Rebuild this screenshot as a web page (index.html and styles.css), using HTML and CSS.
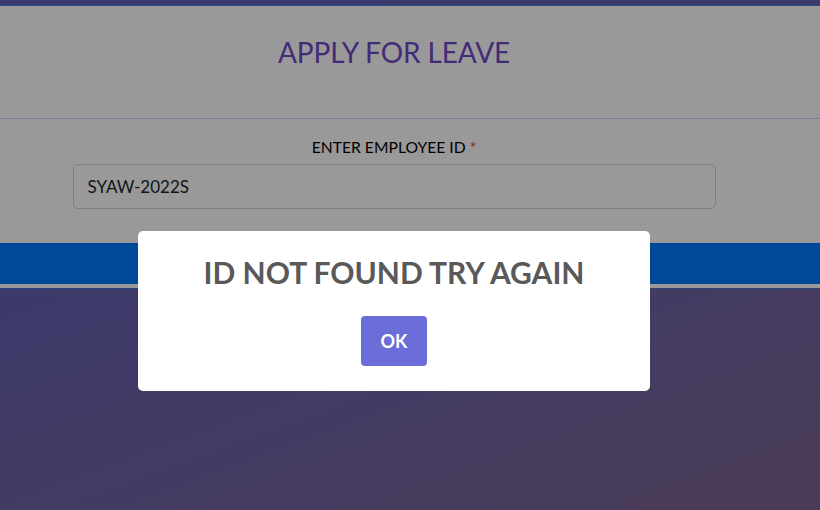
FILE: index.html
```html
<!DOCTYPE html>
<html lang="en">
<head>
<meta charset="utf-8">
<title>Apply for Leave</title>
<link rel="stylesheet" href="styles.css">
</head>
<body>
  <div class="page">
    <div class="card">
      <header class="card-head">
        <h1 class="title">APPLY FOR LEAVE</h1>
      </header>
      <form class="card-body">
        <label class="field-label" for="emp">ENTER EMPLOYEE ID <span class="req">*</span></label>
        <input class="field-input" id="emp" type="text" value="SYAW-2022S">
      </form>
      <div class="actions">
        <button class="submit" type="button" aria-label="Submit"></button>
      </div>
    </div>
  </div>

  <div class="overlay">
    <div class="modal">
      <h2 class="modal-title">ID NOT FOUND TRY AGAIN</h2>
      <button class="modal-ok" type="button">OK</button>
    </div>
  </div>
</body>
</html>
```
FILE: styles.css
```css
* { box-sizing: border-box; }

html, body {
  margin: 0;
  height: 100%;
}

body {
  font-family: "Lato", "Open Sans", sans-serif;
  background: linear-gradient(160deg, #6161bb 0%, #6762b1 40%, #7d6693 100%);
  min-height: 510px;
  overflow: hidden;
}

.page {
  padding-top: 5px;
}

.card {
  background: #ffffff;
  border-top: 1px solid #4a7fe0;
  border-bottom: 1px solid #3f72d6;
}

.card-head {
  height: 113px;
  padding-top: 29px;
  border-bottom: 1px solid #c2d3f5;
}

.title {
  width: 788px;
  margin: 0;
  text-align: center;
  font-weight: 400;
  font-size: 28px;
  line-height: 34px;
  letter-spacing: -0.1px;
  color: #7249c6;
}

.card-body {
  width: 788px;
  padding-top: 18px;
  padding-bottom: 34px;
  display: flex;
  flex-direction: column;
  align-items: center;
}

.field-label {
  font-size: 15.7px;
  line-height: 20px;
  color: #000000;
  margin-bottom: 7px;
}

.req {
  color: #dc3545;
}

.field-input {
  width: 643px;
  height: 45px;
  padding: 0 14px;
  border: 1px solid #ced4da;
  border-radius: 5px;
  font-family: "Lato", "Open Sans", sans-serif;
  font-size: 17px;
  color: #212529;
  background: #ffffff;
}

.actions {
  padding-bottom: 4px;
}

.submit {
  display: block;
  width: 100%;
  height: 41px;
  border: 0;
  background: #007bff;
}

.overlay {
  position: fixed;
  inset: 0;
  background: rgba(0, 0, 0, 0.4);
  padding: 231px 0 0 138px;
}

.modal {
  width: 512px;
  height: 160px;
  background: #ffffff;
  border-radius: 5px;
  padding-top: 23px;
  display: flex;
  flex-direction: column;
  align-items: center;
}

.modal-title {
  margin: 0;
  font-size: 30px;
  line-height: 36px;
  font-weight: 700;
  color: #595959;
}

.modal-ok {
  margin-top: 26px;
  width: 66px;
  height: 50px;
  border: 0;
  border-radius: 4px;
  background: #6b6dd9;
  color: #ffffff;
  font-family: "Lato", sans-serif;
  font-weight: 700;
  font-size: 18px;
}
```
